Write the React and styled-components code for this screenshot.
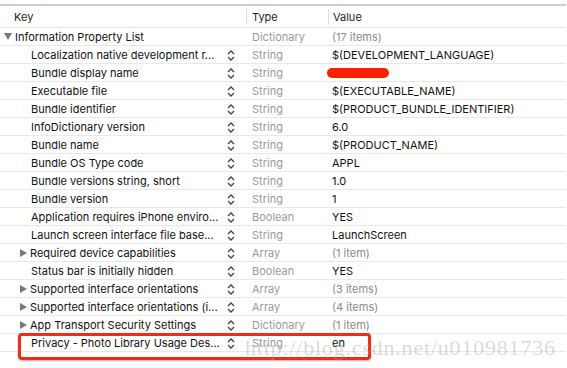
import React from 'react';
import styled, { createGlobalStyle } from 'styled-components';

const GlobalStyle = createGlobalStyle`
  html, body { margin: 0; padding: 0; background: #fff; }
  body { font-family: Inter, "Liberation Sans", sans-serif; }
`;

const rows = [
  { key: 'Localization native development r...', type: 'String', value: '$(DEVELOPMENT_LANGUAGE)' },
  { key: 'Bundle display name', type: 'String', value: '', scribble: true },
  { key: 'Executable file', type: 'String', value: '$(EXECUTABLE_NAME)' },
  { key: 'Bundle identifier', type: 'String', value: '$(PRODUCT_BUNDLE_IDENTIFIER)' },
  { key: 'InfoDictionary version', type: 'String', value: '6.0' },
  { key: 'Bundle name', type: 'String', value: '$(PRODUCT_NAME)' },
  { key: 'Bundle OS Type code', type: 'String', value: 'APPL' },
  { key: 'Bundle versions string, short', type: 'String', value: '1.0' },
  { key: 'Bundle version', type: 'String', value: '1' },
  { key: 'Application requires iPhone enviro...', type: 'Boolean', value: 'YES' },
  { key: 'Launch screen interface file base...', type: 'String', value: 'LaunchScreen' },
  { key: 'Required device capabilities', type: 'Array', value: '(1 item)', folder: true },
  { key: 'Status bar is initially hidden', type: 'Boolean', value: 'YES' },
  { key: 'Supported interface orientations', type: 'Array', value: '(3 items)', folder: true },
  { key: 'Supported interface orientations (i...', type: 'Array', value: '(4 items)', folder: true },
  { key: 'App Transport Security Settings', type: 'Dictionary', value: '(1 item)', folder: true },
  { key: 'Privacy - Photo Library Usage Des...', type: 'String', value: 'en' },
];

const Page = styled.div`
  position: relative;
  padding-top: 4px;
  width: 567px;
  height: 368px;
  overflow: hidden;
  font-size: 11px;
  color: #111;
`;

const Table = styled.div`
  border-top: 2px solid #cfcfcf;
  width: 566px;
`;

const Grid = styled.div`
  display: grid;
  grid-template-columns: 246px 82px 1fr;
  height: ${p => (p.$header ? 22 : 18)}px;
  align-items: center;
  border-bottom: 1px solid #e8e8e8;
  box-sizing: border-box;
`;

const HeadCell = styled.div`
  height: 16px;
  display: flex;
  align-items: center;
  padding-left: ${p => p.$pad}px;
  border-left: ${p => (p.$sep ? '1px solid #dedede' : 'none')};
  color: #222;
`;

const KeyCell = styled.div`
  display: flex;
  align-items: center;
  padding-left: ${p => p.$indent}px;
  height: 100%;
`;

const Disclosure = styled.span`
  width: 0;
  height: 0;
  margin-right: 3px;
  border-style: solid;
  ${p => (p.$open
    ? 'border-width: 7px 4px 0 4px; border-color: #7a7a7a transparent transparent transparent;'
    : 'border-width: 4px 0 4px 7px; border-color: transparent transparent transparent #7a7a7a;')}
`;

const KeyText = styled.span`
  flex: 1;
  white-space: nowrap;
`;

const Stepper = styled.svg`
  width: 8px;
  height: 13px;
  margin-right: 11px;
  margin-top: 2px;
`;

const TypeCell = styled.div`
  padding-left: 6px;
  color: #9a9a9a;
`;

const ValueCell = styled.div`
  padding-left: 4px;
  position: relative;
  height: 100%;
  display: flex;
  align-items: center;
  color: ${p => (p.$muted ? '#8a8a8a' : '#111')};
`;

const Scribble = styled.span`
  position: absolute;
  left: -1px;
  top: 4px;
  width: 62px;
  height: 10px;
  border-radius: 6px;
  background: #ff2000;
`;

const Highlight = styled.div`
  position: absolute;
  left: 18px;
  top: 333px;
  width: 347px;
  height: 21px;
  border: 3px solid #ee2d17;
  border-radius: 4px;
  box-shadow: 0 1px 2px rgba(150, 0, 0, 0.35);
`;

const Watermark = styled.div`
  position: absolute;
  left: 245px;
  top: 335px;
  font-family: "Liberation Serif", serif;
  font-size: 22px;
  letter-spacing: 0.8px;
  color: rgba(160, 160, 160, 0.4);
  white-space: nowrap;
`;

const StepIcon = () => (
  <Stepper viewBox="0 0 8 13">
    <path d="M1 5 L4 2 L7 5 M1 8 L4 11 L7 8" fill="none" stroke="#444" strokeWidth="1.3" />
  </Stepper>
);

export default function App() {
  return (
    <Page>
      <GlobalStyle />
      <Table>
        <Grid $header>
          <HeadCell $pad={14}>Key</HeadCell>
          <HeadCell $sep $pad={5}>Type</HeadCell>
          <HeadCell $sep $pad={4}>Value</HeadCell>
        </Grid>
        <Grid>
          <KeyCell $indent={4}>
            <Disclosure $open />
            <KeyText>Information Property List</KeyText>
          </KeyCell>
          <TypeCell>Dictionary</TypeCell>
          <ValueCell $muted>(17 items)</ValueCell>
        </Grid>
        {rows.map(r => (
          <Grid key={r.key}>
            <KeyCell $indent={r.folder ? 20 : 31}>
              {r.folder && <Disclosure />}
              <KeyText>{r.key}</KeyText>
              <StepIcon />
            </KeyCell>
            <TypeCell>{r.type}</TypeCell>
            <ValueCell $muted={r.value.startsWith('(')}>
              {r.value}
              {r.scribble && <Scribble />}
            </ValueCell>
          </Grid>
        ))}
      </Table>
      <Highlight />
      <Watermark>http://blog.csdn.net/u010981736</Watermark>
    </Page>
  );
}
